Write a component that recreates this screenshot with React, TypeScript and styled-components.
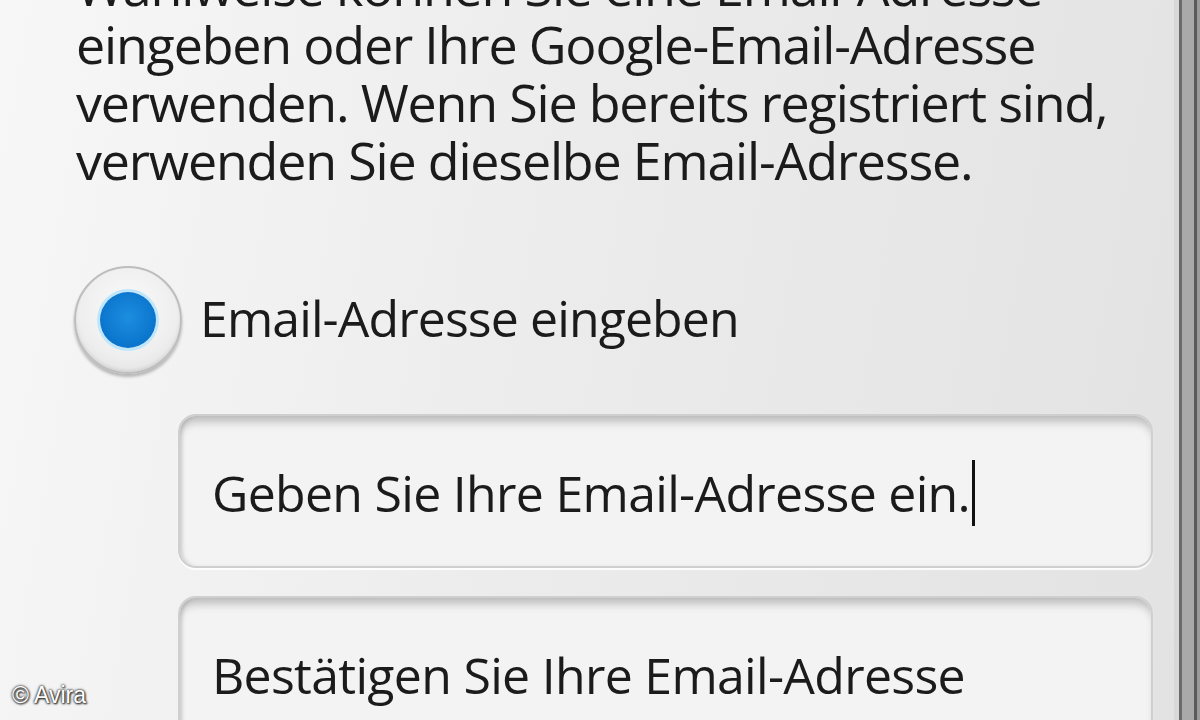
import styled, { createGlobalStyle } from "styled-components";

const GlobalStyle = createGlobalStyle`
  html, body {
    margin: 0;
    padding: 0;
    width: 1200px;
    height: 720px;
    overflow: hidden;
  }
  body {
    font-family: "Open Sans", "Noto Sans", "DejaVu Sans", sans-serif;
  }
`;

const Screen = styled.div`
  display: flex;
  width: 1200px;
  height: 720px;
  overflow: hidden;
  background: linear-gradient(100deg, #f7f7f7 0%, #ececec 45%, #e2e2e2 100%);
  position: relative;
`;

const Content = styled.div`
  flex: 1;
  display: flex;
  flex-direction: column;
  padding: 0 0 0 76px;
`;

const Intro = styled.p`
  margin: -43px 0 0 0;
  font-size: 52px;
  letter-spacing: -1.2px;
  line-height: 58px;
  white-space: nowrap;
  color: #1b1b1b;
`;

const RadioRow = styled.label`
  display: flex;
  align-items: center;
  gap: 18px;
  margin: 77px 0 0 -2px;
`;

const RadioOuter = styled.span`
  width: 108px;
  height: 108px;
  border-radius: 50%;
  display: flex;
  align-items: center;
  justify-content: center;
  background: radial-gradient(circle at 50% 40%, #fbfbfb 0%, #eeeeee 60%, #d9d9d9 100%);
  border: 2px solid #bdbdbd;
  box-shadow: 0 3px 3px rgba(0, 0, 0, 0.25), inset 0 -2px 3px rgba(0, 0, 0, 0.08);
  box-sizing: border-box;
`;

const RadioDot = styled.span`
  width: 56px;
  height: 56px;
  border-radius: 50%;
  background: radial-gradient(circle at 50% 45%, #1d8ee0 0%, #0a74cc 70%, #0765b5 100%);
  box-shadow: 0 0 0 3px #bfe6fb;
`;

const RadioLabel = styled.span`
  font-size: 50px;
  letter-spacing: -0.9px;
  white-space: nowrap;
  color: #1b1b1b;
  margin-top: -4px;
`;

const Fields = styled.div`
  display: flex;
  flex-direction: column;
  gap: 28px;
  margin: 40px 0 0 102px;
  width: 975px;
`;

const Field = styled.div`
  height: 154px;
  border-radius: 18px;
  background: #f3f3f3;
  border: 2px solid #cfcfcf;
  box-sizing: border-box;
  box-shadow: inset 0 10px 8px -4px rgba(0, 0, 0, 0.22), inset 4px 0 4px -2px rgba(0, 0, 0, 0.15),
    0 2px 1px rgba(255, 255, 255, 0.9);
  display: flex;
  align-items: center;
  padding: 0 0 0 32px;
  flex-shrink: 0;
`;

const FieldText = styled.span`
  font-size: 50px;
  letter-spacing: -0.7px;
  white-space: nowrap;
  color: #1b1b1b;
  display: flex;
  align-items: center;
  margin-top: 4px;
`;

const Caret = styled.span`
  display: inline-block;
  width: 3px;
  height: 66px;
  background: #111;
  margin-left: 2px;
`;

const EdgeBar = styled.div`
  width: 26px;
  height: 100%;
  display: flex;
`;

const EdgeLine = styled.span<{ $w: number; $c: string }>`
  width: ${({ $w }) => $w}px;
  background: ${({ $c }) => $c};
`;

const Watermark = styled.div`
  position: absolute;
  left: 12px;
  bottom: 11px;
  font-family: "Liberation Sans", Arial, sans-serif;
  font-size: 23px;
  color: #fff;
  text-shadow: 0 0 2px #333, 0 0 3px #333, 1px 1px 2px #222;
`;

export default function App() {
  return (
    <>
      <GlobalStyle />
      <Screen>
        <Content>
          <Intro>
            Wahlweise können Sie eine Email-Adresse
            <br />
            eingeben oder Ihre Google-Email-Adresse
            <br />
            verwenden. Wenn Sie bereits registriert sind,
            <br />
            verwenden Sie dieselbe Email-Adresse.
          </Intro>
          <RadioRow>
            <RadioOuter>
              <RadioDot />
            </RadioOuter>
            <RadioLabel>Email-Adresse eingeben</RadioLabel>
          </RadioRow>
          <Fields>
            <Field>
              <FieldText>
                Geben Sie Ihre Email-Adresse ein.
                <Caret />
              </FieldText>
            </Field>
            <Field>
              <FieldText>Bestätigen Sie Ihre Email-Adresse</FieldText>
            </Field>
          </Fields>
        </Content>
        <EdgeBar>
          <EdgeLine $w={5} $c="#d8d8d8" />
          <EdgeLine $w={3} $c="#6a6a6a" />
          <EdgeLine $w={12} $c="#a9a9a9" />
          <EdgeLine $w={3} $c="#5a5a5a" />
          <EdgeLine $w={3} $c="#9a9a9a" />
        </EdgeBar>
        <Watermark>© Avira</Watermark>
      </Screen>
    </>
  );
}
